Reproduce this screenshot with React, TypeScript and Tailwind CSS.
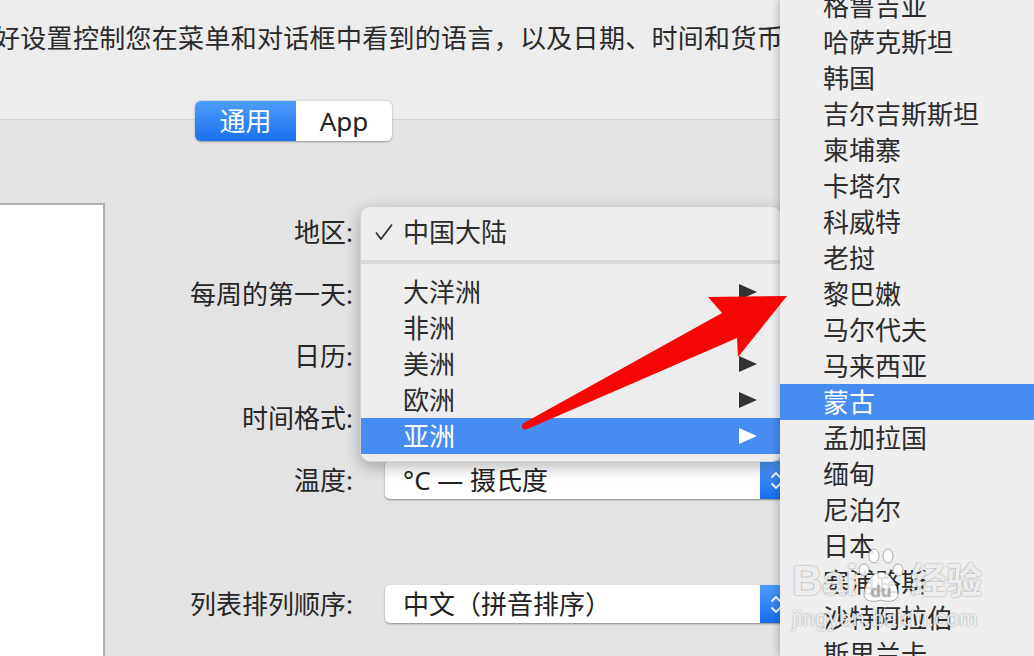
import React from "react";

const rows: { label: string; value: string }[] = [
  { label: "地区:", value: "中国大陆" },
  { label: "每周的第一天:", value: "星期一" },
  { label: "日历:", value: "公历" },
  { label: "时间格式:", value: "24小时制" },
  { label: "温度:", value: "°C — 摄氏度" },
];

const regions = ["大洋洲", "非洲", "美洲", "欧洲", "亚洲"];

const asia = [
  "格鲁吉亚",
  "哈萨克斯坦",
  "韩国",
  "吉尔吉斯斯坦",
  "柬埔寨",
  "卡塔尔",
  "科威特",
  "老挝",
  "黎巴嫩",
  "马尔代夫",
  "马来西亚",
  "蒙古",
  "孟加拉国",
  "缅甸",
  "尼泊尔",
  "日本",
  "塞浦路斯",
  "沙特阿拉伯",
  "斯里兰卡",
];

function Stepper() {
  return (
    <div className="w-[32px] h-full bg-gradient-to-b from-[#4c9cfb] to-[#186ef0] rounded-r-[5px] flex flex-col items-center justify-center gap-[3px]">
      <svg width="12" height="8" viewBox="0 0 12 8">
        <polyline points="1.5,6.5 6,2 10.5,6.5" fill="none" stroke="white" strokeWidth="1.8" />
      </svg>
      <svg width="12" height="8" viewBox="0 0 12 8">
        <polyline points="1.5,1.5 6,6 10.5,1.5" fill="none" stroke="white" strokeWidth="1.8" />
      </svg>
    </div>
  );
}

function Popup({ value }: { value: string }) {
  return (
    <div className="ml-[32px] w-[407px] h-[38px] bg-white rounded-[5px] shadow-[0_1px_2px_rgba(0,0,0,0.4)] flex items-center">
      <div className="flex-1 pl-[18px] text-[26px] leading-[38px] text-[#222] whitespace-nowrap">{value}</div>
      <Stepper />
    </div>
  );
}

function Tri({ white }: { white?: boolean }) {
  return (
    <svg width="18" height="16" viewBox="0 0 18 16" className="absolute right-[24px]">
      <polygon points="0,0 18,8 0,16" fill={white ? "#ffffff" : "#333333"} />
    </svg>
  );
}

export default function App() {
  return (
    <div className="relative w-[1034px] h-[656px] overflow-hidden bg-[#e3e3e3] text-[#262626] font-['Noto_Sans','Noto_Sans_CJK_SC',sans-serif]">
      {/* header */}
      <div className="h-[120px] bg-[#ececec] border-b border-[#d4d4d4] pt-[25px]">
        <div className="ml-[-6px] whitespace-nowrap text-[26px] leading-[26px] tracking-[0.3px] text-[#2a2a2a]">
          好设置控制您在菜单和对话框中看到的语言，以及日期、时间和货币
        </div>
      </div>

      {/* segmented control */}
      <div className="ml-[195px] -mt-[19px] flex w-[197px] h-[40px] rounded-[6px] overflow-hidden shadow-[0_0.5px_2px_rgba(0,0,0,0.35)]">
        <div className="w-[101px] h-full bg-gradient-to-b from-[#4d9dfb] to-[#1b6ff0] text-white text-[26px] leading-[40px] text-center">
          通用
        </div>
        <div className="flex-1 h-full bg-white text-[#222] text-[26px] leading-[40px] text-center">App</div>
      </div>

      {/* content */}
      <div className="flex">
        <div className="w-[105px] mt-[62px] h-[520px] bg-white border-t-2 border-r-2 border-[#b0b0b0]" />
        <div className="mt-[72px] flex flex-col gap-[24px]">
          {rows.map((r) => (
            <div key={r.label} className="flex items-center h-[38px]">
              <div className="w-[248px] text-right text-[26px] leading-[38px] whitespace-nowrap">{r.label}</div>
              <Popup value={r.value} />
            </div>
          ))}
          <div className="h-[38px]" />
          <div className="flex items-center h-[38px]">
            <div className="w-[248px] text-right text-[26px] leading-[38px] whitespace-nowrap">列表排列顺序:</div>
            <Popup value="中文（拼音排序）" />
          </div>
        </div>
      </div>

      {/* region popup menu */}
      <div className="absolute left-[360px] top-[206px] w-[422px] rounded-[10px] bg-[#ededed] border border-[#d2d2d2] shadow-[0_5px_16px_rgba(0,0,0,0.28)] py-[7px]">
        <div className="relative h-[36px] flex items-center pl-[42px] text-[26px] leading-[36px] text-[#2c2c2c]">
          <svg width="20" height="18" viewBox="0 0 20 18" className="absolute left-[13px]">
            <polyline points="2,9.5 7,16 18,1.5" fill="none" stroke="#333" strokeWidth="1.8" />
          </svg>
          中国大陆
        </div>
        <div className="my-[10px] h-[4px] bg-[#d9d9d9]" />
        {regions.map((r) => {
          const sel = r === "亚洲";
          return (
            <div
              key={r}
              className={
                sel
                  ? "relative h-[36px] flex items-center pl-[42px] text-[26px] leading-[36px] bg-[#468cf1] text-white"
                  : "relative h-[36px] flex items-center pl-[42px] text-[26px] leading-[36px] text-[#2c2c2c]"
              }
            >
              {r}
              <Tri white={sel} />
            </div>
          );
        })}
      </div>

      {/* asia submenu */}
      <div className="absolute top-0 right-0 w-[254px] h-[656px] bg-[#eeeeee] shadow-[-3px_0_6px_rgba(0,0,0,0.18)]">
        <div className="-mt-[12px]">
          {asia.map((c) => (
            <div
              key={c}
              className={
                c === "蒙古"
                  ? "h-[36px] pl-[43px] text-[26px] leading-[36px] bg-[#468cf1] text-white whitespace-nowrap"
                  : "h-[36px] pl-[43px] text-[26px] leading-[36px] text-[#2c2c2c] whitespace-nowrap"
              }
            >
              {c}
            </div>
          ))}
        </div>
      </div>

      {/* red arrow */}
      <svg className="absolute left-0 top-0 pointer-events-none" width="1034" height="656" viewBox="0 0 1034 656">
        <polygon
          points="523,423.5 722,313 708,297 787,296 738,357 737,338 527.5,429"
          fill="#f70606"
        />
        <circle cx="525" cy="426.5" r="3" fill="#f70606" />
      </svg>

      {/* watermark */}
      <div className="absolute left-[792px] top-[548px] text-[rgba(255,255,255,0.85)] [text-shadow:0_0_2px_rgba(0,0,0,0.45)] pointer-events-none">
        <div className="flex items-end h-[56px]">
          <span className="text-[42px] leading-[46px] font-bold font-['Liberation_Sans',sans-serif]">Bai</span>
          <svg width="46" height="56" viewBox="0 0 46 56" className="ml-[1px]">
            <g fill="rgba(255,255,255,0.85)" stroke="rgba(0,0,0,0.3)" strokeWidth="1">
              <ellipse cx="16" cy="8" rx="5" ry="7" />
              <ellipse cx="30" cy="8" rx="5" ry="7" />
              <ellipse cx="6" cy="22" rx="5" ry="6" />
              <ellipse cx="40" cy="22" rx="5" ry="6" />
              <path d="M23 24 C14 24 6 38 6 46 C6 53 14 55 23 52 C32 55 40 53 40 46 C40 38 32 24 23 24 Z" />
            </g>
            <text x="23" y="49" textAnchor="middle" fontSize="17" fontWeight="bold" fill="rgba(160,160,160,0.6)" fontFamily="Liberation Sans, sans-serif">du</text>
          </svg>
          <span className="ml-[6px] text-[36px] leading-[46px] font-bold">经验</span>
        </div>
        <div className="text-[22px] leading-[26px] mt-[2px] tracking-[0.5px] font-['Liberation_Sans',sans-serif]">jingyan.baidu.com</div>
      </div>
    </div>
  );
}
